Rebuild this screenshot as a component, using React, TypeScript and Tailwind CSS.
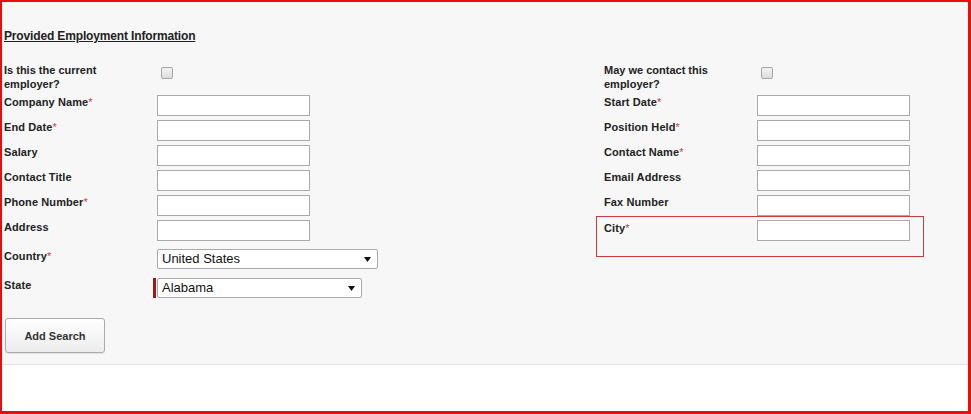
import React from "react";

type Field = { label: string; required?: boolean };

const leftFields: Field[] = [
  { label: "Company Name", required: true },
  { label: "End Date", required: true },
  { label: "Salary" },
  { label: "Contact Title" },
  { label: "Phone Number", required: true },
  { label: "Address" },
];

const rightFields: Field[] = [
  { label: "Start Date", required: true },
  { label: "Position Held", required: true },
  { label: "Contact Name", required: true },
  { label: "Email Address" },
  { label: "Fax Number" },
];

const Req = () => <span className="text-[#d23a3a] font-normal">*</span>;

const Checkbox = () => (
  <span className="ml-1 mt-[4px] block w-[12px] h-[12px] rounded-[2px] border border-[#a6a6a6] bg-linear-to-b from-[#f4f4f4] to-[#dcdcdc]" />
);

const CheckRow = ({ label }: { label: string }) => (
  <div className="flex items-start mb-[4px]">
    <div className="w-[153px] leading-[14px] pr-2">{label}</div>
    <Checkbox />
  </div>
);

const TextRow = ({ label, required, last }: Field & { last?: boolean }) => (
  <div className={"flex items-start h-[21px] " + (last ? "" : "mb-[4px]")}>
    <div className="w-[153px] leading-[14px] tracking-[0.1px]">
      {label}
      {required && <Req />}
    </div>
    <input type="text" className="w-[153px] h-[21px] bg-white border border-[#a9a9a9] outline-none" />
  </div>
);

const Select = ({ value, width }: { value: string; width: string }) => (
  <div
    className={
      "h-[20px] flex items-center justify-between pl-[4px] pr-[6px] bg-white border border-[#a9a9a9] rounded-[2px] text-[13px] font-normal text-[#111] " +
      width
    }
  >
    <span>{value}</span>
    <svg width="7" height="5" viewBox="0 0 7 5">
      <path d="M0 0H7L3.5 5Z" fill="#111" />
    </svg>
  </div>
);

export default function App() {
  return (
    <div className="w-[971px] h-[414px] bg-white border-t-2 border-l-2 border-r-[3px] border-b-[3px] border-[#e80e0e] font-['Liberation_Sans',Arial,sans-serif] text-[11px] font-bold text-[#222]">
      <div className="h-[363px] bg-[#f7f7f7] border-b border-[#e2e2e2] pl-[2px] pt-[27px]">
        <h2 className="text-[12px] leading-[14px] font-bold underline tracking-[-0.15px]">
          Provided Employment Information
        </h2>

        <div className="flex mt-[20px]">
          {/* left column */}
          <div className="w-[592px]">
            <CheckRow label="Is this the current employer?" />
            {leftFields.map((f, i) => (
              <TextRow key={f.label} {...f} last={i === leftFields.length - 1} />
            ))}

            <div className="flex items-start mt-[8px]">
              <div className="w-[153px] leading-[14px] tracking-[0.1px]">
                Country
                <Req />
              </div>
              <Select value="United States" width="w-[221px]" />
            </div>

            <div className="flex items-start mt-[9px]">
              <div className="w-[149px] leading-[14px] tracking-[0.1px]">State</div>
              <span className="w-[3px] h-[20px] bg-[#a3171b] mr-px" />
              <Select value="Alabama" width="w-[205px]" />
            </div>

            <button className="ml-px mt-[20px] w-[100px] h-[35px] border border-[#ababab] rounded-[3px] bg-linear-to-b from-white to-[#ececec] shadow-[0_1px_1px_rgba(0,0,0,0.08)] pt-px text-[11px] font-bold text-[#333]">
              Add Search
            </button>
          </div>

          {/* right column */}
          <div>
            <div className="pl-2">
              <CheckRow label="May we contact this employer?" />
              {rightFields.map((f, i) => (
                <TextRow key={f.label} {...f} last={i === rightFields.length - 1} />
              ))}
            </div>
            <div className="w-[328px] border border-[#cc3a3a] pl-[7px] pr-[13px] pt-[3px] pb-[15px]">
              <div className="flex items-start h-[21px]">
                <div className="w-[153px] leading-[16px] tracking-[0.1px]">
                  City
                  <Req />
                </div>
                <input type="text" className="w-[153px] h-[21px] bg-white border border-[#a9a9a9] outline-none" />
              </div>
            </div>
          </div>
        </div>
      </div>
    </div>
  );
}
